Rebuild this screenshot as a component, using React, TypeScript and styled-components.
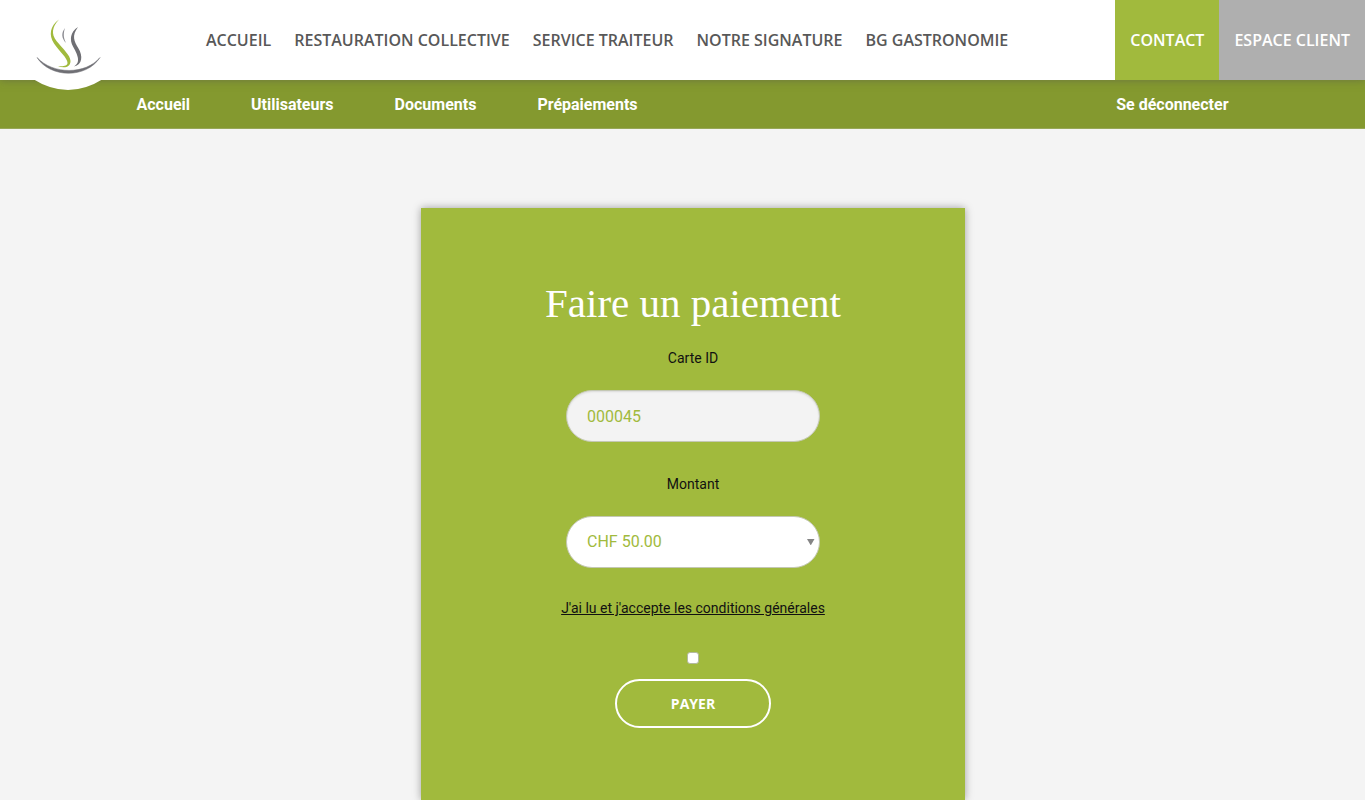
import React, { useState } from "react";
import styled, { createGlobalStyle, css } from "styled-components";

const green = "#a1ba3d";
const sans = `Roboto, "Liberation Sans", sans-serif`;
const heading = `"Open Sans", "Noto Sans", sans-serif`;

const GlobalStyle = createGlobalStyle`
  * { box-sizing: border-box; }
  body { margin: 0; background: #f4f4f4; font-family: ${sans}; }
`;

const Page = styled.div`
  min-height: 100vh;
  display: flex;
  flex-direction: column;
`;

const Header = styled.header`
  position: relative;
  z-index: 1;
  height: 80px;
  display: flex;
  align-items: stretch;
  background: #fff;
  box-shadow: 0 0 8px rgba(80, 80, 80, 0.5);
`;

const LogoLink = styled.a`
  flex: none;
  width: 206px;
  height: 92px;
`;

const SiteNav = styled.nav`
  flex: 1;
  display: flex;
  align-items: center;
  gap: 23px;
`;

const headerText = css`
  font: 600 16px/20px ${heading};
  text-decoration: none;
  white-space: nowrap;
`;

const SiteLink = styled.a`
  ${headerText}
  color: #585858;
`;

const HeaderTab = styled.a<{ $tone: string }>`
  ${headerText}
  display: flex;
  align-items: center;
  padding: 0 15px;
  color: #fff;
  background: ${(p) => p.$tone};
`;

const AccountBar = styled.nav`
  height: 49px;
  display: flex;
  align-items: center;
  gap: 61px;
  padding: 1px 10% 0;
  background: #84992f;
  border-bottom: 1px solid #97a757;
`;

const AccountLink = styled.a<{ $last?: boolean }>`
  margin-left: ${(p) => (p.$last ? "auto" : "0")};
  color: #fff;
  font: 700 16px/20px ${sans};
  text-decoration: none;
`;

const Main = styled.main`
  flex: 1;
  display: flex;
  justify-content: center;
  padding: 79px 0 0 21px;
`;

const Card = styled.form`
  width: 544px;
  max-width: 100%;
  display: flex;
  flex-direction: column;
  align-items: center;
  padding: 70px 20px;
  background: ${green};
  box-shadow: 0 0 8px rgba(0, 0, 0, 0.35);
`;

const Title = styled.h1`
  margin: 0 0 20px;
  color: #fff;
  font: 400 41px/50px "Liberation Serif", serif;
`;

const Label = styled.label`
  margin-bottom: 22px;
  color: #111;
  font: 400 14px/20px ${sans};
`;

const fieldLook = css`
  width: 254px;
  height: 52px;
  padding: 0 20px;
  border: 1px solid #c4c8b4;
  border-radius: 26px;
  color: ${green};
  font: 400 16px/20px ${sans};
  outline: none;
`;

const TextField = styled.input`
  ${fieldLook}
  margin-bottom: 32px;
  background: #f3f3f3;
  box-shadow: inset 0 1px 2px rgba(0, 0, 0, 0.1);
`;

const SelectWrap = styled.div`
  position: relative;
  margin-bottom: 30px;
`;

const SelectField = styled.select`
  ${fieldLook}
  display: block;
  appearance: none;
  background: #fff;
`;

const Arrow = styled.svg`
  position: absolute;
  top: 22px;
  right: 5px;
  pointer-events: none;
`;

const TermsLink = styled.a`
  margin-bottom: 34px;
  color: #111;
  font: 400 14px/20px ${sans};
`;

const Checkbox = styled.input`
  appearance: none;
  width: 12px;
  height: 12px;
  margin: 0 0 15px;
  border: 1px solid #b3b9a0;
  border-radius: 3px;
  background: #fff;
  &:checked { background: #5c7512; }
`;

const PayButton = styled.button`
  width: 156px;
  height: 49px;
  border: 2px solid #fff;
  border-radius: 25px;
  background: transparent;
  color: #fff;
  font: 700 14px/20px ${heading};
  cursor: pointer;
`;

const siteLinks = ["Accueil", "Restauration collective", "Service traiteur", "Notre signature", "BG Gastronomie"];
const accountLinks = ["Accueil", "Utilisateurs", "Documents", "Prépaiements"];

function Logo() {
  return (
    <svg width="206" height="92" viewBox="0 0 206 92" aria-hidden="true">
      <path d="M33 79Q68 101 103 79Z" fill="#fff" />
      <path d="M59 19.5C50 26 48.5 35 54 43.5C59 51 67.5 58 67.5 63C67.5 66 63 66.5 58 66C64 68.5 70.5 67.5 70.5 61C70.5 55 62 48 56.5 41C51 34 52 27 59 19.5Z" fill="#a1ba3d" />
      <path d="M78 27C70 32 69.5 40 73 46.5C76.5 53 82 62 74 66.5C82.500 64.500 83 56 78.500 48.500C74 41 71.500 36 78 27Z" fill="#6f6f74" />
      <path d="M65 28C61 33 61.500 38 66 43C63 37 63.500 33 65 28Z" fill="#8b8b91" />
      <path d="M37 57.500C50 78 86 79 100 57.500C86 74.500 53 75 37 57.500Z" fill="#6f6f74" stroke="#6f6f74" strokeWidth="0.500" />
    </svg>
  );
}

export default function App() {
  const [accepted, setAccepted] = useState(false);
  return (
    <>
      <GlobalStyle />
      <Page>
        <Header>
          <LogoLink href="#" aria-label="BG"><Logo /></LogoLink>
          <SiteNav>
            {siteLinks.map((name) => <SiteLink href="#" key={name}>{name.toUpperCase()}</SiteLink>)}
          </SiteNav>
          <HeaderTab href="#" $tone={green}>CONTACT</HeaderTab>
          <HeaderTab href="#" $tone="#afafaf">ESPACE CLIENT</HeaderTab>
        </Header>
        <AccountBar>
          {accountLinks.map((name) => <AccountLink href="#" key={name}>{name}</AccountLink>)}
          <AccountLink href="#" $last>Se déconnecter</AccountLink>
        </AccountBar>
        <Main>
          <Card onSubmit={(e) => e.preventDefault()}>
            <Title>Faire un paiement</Title>
            <Label htmlFor="card-id">Carte ID</Label>
            <TextField id="card-id" type="text" readOnly value="000045" />
            <Label htmlFor="amount">Montant</Label>
            <SelectWrap>
              <SelectField id="amount" defaultValue="50">
                <option value="50">CHF 50.00</option>
                <option value="100">CHF 100.00</option>
              </SelectField>
              <Arrow width="9" height="7" viewBox="0 0 9 7"><path d="M1 1H8.5L5 7H4.5Z" fill="#858585" /></Arrow>
            </SelectWrap>
            <TermsLink href="#" id="terms">J'ai lu et j'accepte les conditions générales</TermsLink>
            <Checkbox type="checkbox" aria-labelledby="terms" checked={accepted} onChange={(e) => setAccepted(e.target.checked)} />
            <PayButton type="submit">PAYER</PayButton>
          </Card>
        </Main>
      </Page>
    </>
  );
}
